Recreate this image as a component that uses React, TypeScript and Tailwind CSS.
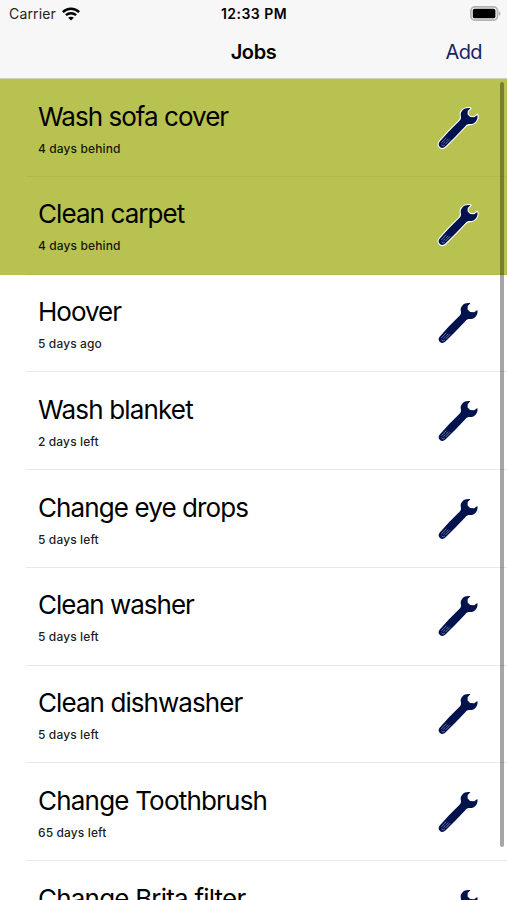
import clsx from "clsx"

const jobs = [
  { title: "Wash sofa cover", status: "4 days behind", overdue: true, tracking: "tracking-[-0.97px]" },
  { title: "Clean carpet", status: "4 days behind", overdue: true, tracking: "tracking-[-0.92px]" },
  { title: "Hoover", status: "5 days ago", overdue: false, tracking: "tracking-[-1px]" },
  { title: "Wash blanket", status: "2 days left", overdue: false, tracking: "tracking-[-0.83px]" },
  { title: "Change eye drops", status: "5 days left", overdue: false, tracking: "tracking-[-0.9px]" },
  { title: "Clean washer", status: "5 days left", overdue: false, tracking: "tracking-[-1px]" },
  { title: "Clean dishwasher", status: "5 days left", overdue: false, tracking: "tracking-[-0.93px]" },
  { title: "Change Toothbrush", status: "65 days left", overdue: false, tracking: "tracking-[-0.8px]" },
  { title: "Change Brita filter", status: "65 days left", overdue: false, tracking: "tracking-[-0.8px]" },
]

const wrenchPath =
  "M34.4 3.3C31.2 2.7 28.2 3.5 26.4 5.4C24.6 7.2 24.4 9.4 24.9 11.4C25.3 13.4 24.7 14.6 23.3 16L13 26.2L3.8 36.6C2.3 38.4 2.2 40.2 3.7 41.7C5.3 43.3 7.6 43.3 9.4 41.6L19 32L29.3 21.2C30.7 19.6 31.8 19.1 33.8 19.1C36.4 19.1 38.6 18.2 40 16.2C41.4 14.3 41.9 12.2 41.3 9.9L38.2 12.3L34.1 11.9L31.6 9.4L31.7 6.1Z"

function WrenchIcon() {
  return (
    <svg viewBox="0 0 44 46" className="h-[46px] w-[44px]">
      <path d={wrenchPath} fill="#fff" stroke="#fff" strokeWidth="2.2" strokeLinejoin="round" />
      <path d={wrenchPath} fill="#02124d" />
      <path
        d="M5.4 37.9L10.4 32.6M9.6 39L14.2 34.2M7.2 38.6L9.3 36.4M10.2 35.9L12.3 33.8M5.4 39.8L7 41.1L9 39.9"
        stroke="#8f98b8"
        strokeWidth="0.7"
        fill="none"
      />
    </svg>
  )
}

function WifiIcon() {
  return (
    <svg viewBox="0 0 18 14" className="h-[14px] w-[18px]" fill="none" stroke="#000" strokeWidth="2.4">
      <path d="M0.9 5.1C5.4 0.7 12.6 0.7 17.1 5.1" />
      <path d="M3.9 8.2C6.8 5.5 11.2 5.5 14.1 8.2" />
      <path d="M9 13.6L6.2 10.8C7.8 9.4 10.2 9.4 11.8 10.8Z" fill="#000" stroke="none" />
    </svg>
  )
}

function BatteryIcon() {
  return (
    <svg viewBox="0 0 31 15" className="h-[15px] w-[31px]">
      <rect x="0.9" y="0.9" width="26.6" height="13.2" rx="3.8" fill="#f7f7f7" stroke="#b2b2b2" strokeWidth="1.7" />
      <rect x="2.8" y="2.7" width="22.6" height="9.6" rx="1.9" fill="#000" />
      <path d="M28.8 5.2C31 6 31 9 28.8 9.8Z" fill="#b2b2b2" />
    </svg>
  )
}

function StatusBar() {
  return (
    <div className="grid h-[27px] grid-cols-3 items-center text-[14px] leading-[27px]">
      <div className="flex items-center gap-[6px] pl-[9px]">
        <span className="tracking-[0.15px] text-[#222]">Carrier</span>
        <WifiIcon />
      </div>
      <span className="pl-px text-center font-semibold tracking-[0.45px]">12:33 PM</span>
      <div className="flex justify-end pr-[6px]">
        <BatteryIcon />
      </div>
    </div>
  )
}

function JobRow({ job }: { job: (typeof jobs)[number] }) {
  return (
    <li className={clsx("h-[97.75px]", job.overdue ? "bg-[#b8c250]" : "bg-white")}>
      <div
        className={clsx(
          "ml-[26px] flex h-full items-start justify-between border-b pl-3 pr-[27px]",
          job.overdue ? "border-[#b0b94d]" : "border-[#e8e8e8]"
        )}
      >
        <div className="pt-[20.5px] whitespace-nowrap">
          <h2 className={clsx("text-[26px] leading-[34px]", job.tracking)}>{job.title}</h2>
          <p className="mt-[6px] text-[12px] leading-[18px] font-[450] tracking-[0.12px] text-black/90">{job.status}</p>
        </div>
        <div className="pt-[25.5px]">
          <WrenchIcon />
        </div>
      </div>
    </li>
  )
}

export default function App() {
  return (
    <div className="relative h-[900px] w-[507px] overflow-hidden bg-white font-['Inter',sans-serif] text-black">
      <header className="h-[79px] border-b border-[#d0d3b8] bg-[#f7f7f7]">
        <StatusBar />
        <nav className="grid h-[50px] grid-cols-3 items-center">
          <span />
          <h1 className="text-center text-[20px] font-semibold tracking-[-0.4px]">Jobs</h1>
          <button className="pr-[25px] text-right text-[20px] tracking-[-0.6px] text-[#16245e]">Add</button>
        </nav>
      </header>
      <ul>
        {jobs.map((job) => (
          <JobRow key={job.title} job={job} />
        ))}
      </ul>
      {/* scroll indicator */}
      <div className="absolute top-[82px] right-[3px] h-[765px] w-[4px] rounded-full bg-black/35" />
    </div>
  )
}
